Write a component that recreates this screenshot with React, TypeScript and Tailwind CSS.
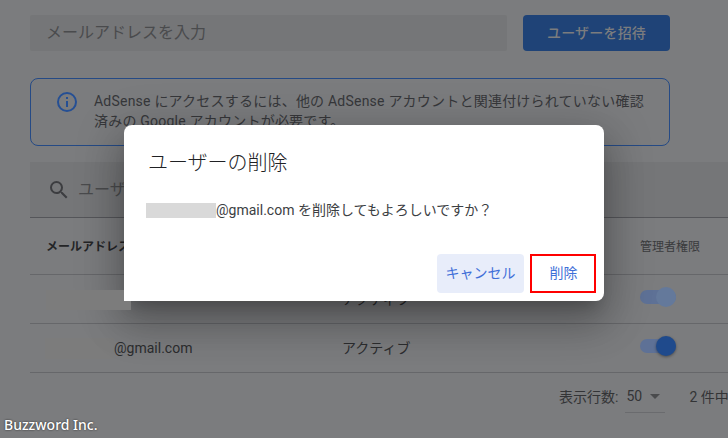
import React from "react";

function Toggle({ on }: { on: boolean }) {
  return (
    <div className="relative mb-[4px] h-[14px] w-[36px] rounded-full bg-[#5e7196]">
      <div className={`absolute right-0 top-[-3px] h-[20px] w-[20px] rounded-full ${on ? "bg-[#1f4a8c] shadow-[0_1px_3px_rgba(0,0,0,0.4)]" : "bg-[#64799b]"}`} />
    </div>
  );
}

export default function App() {
  return (
    <div className="relative h-[438px] w-[728px] overflow-hidden bg-[#7b7c7e] font-['Roboto','Noto_Sans_CJK_JP',sans-serif] text-[14px] text-[#2c2d2f]">
      <div className="ml-[30px] flex w-[698px] flex-col pt-[15px]">
        <div className="flex gap-[16px]">
          <div className="flex h-[36px] w-[477px] items-center rounded-[2px] bg-[#757678] pl-[16px] text-[16px] text-[#4a4b4d]">メールアドレスを入力</div>
          <div className="flex h-[36px] w-[147px] items-center justify-center rounded-[4px] bg-[#1f4377] text-[14px] font-medium tracking-[0.2px] text-[#7b7c7e]">ユーザーを招待</div>
        </div>
        <div className="mt-[27px] flex h-[68px] w-[640px] items-start rounded-[8px] border border-[#254a85] pl-[24px] pr-[24px] pt-[12px]">
          <svg width="24" height="24" viewBox="0 0 24 24" fill="none" className="mt-[-1px] shrink-0 text-[#254f94]">
            <circle cx="12" cy="12" r="9" stroke="currentColor" strokeWidth="2" />
            <path d="M11 11h2v6h-2zM11 7h2v2h-2z" fill="currentColor" />
          </svg>
          <p className="ml-[15px] text-[14px] leading-[20px] tracking-[0.22px] text-[#36373a]">AdSense にアクセスするには、他の AdSense アカウントと関連付けられていない確認済みの Google アカウントが必要です。</p>
        </div>
        <div className="mt-[16px] flex h-[56px] items-center border-b border-[#55565a] bg-[#757678] pl-[17px] text-[16px] text-[#4a4b4d]">
          <svg width="24" height="24" viewBox="0 0 24 24" className="text-[#3c3d40]" fill="currentColor">
            <path d="M15.5 14h-.79l-.28-.27A6.47 6.47 0 0 0 16 9.5 6.5 6.5 0 1 0 9.5 16c1.61 0 3.09-.59 4.23-1.57l.27.28v.79l5 4.99L20.49 19l-4.99-5zm-6 0C7.01 14 5 11.99 5 9.5S7.01 5 9.5 5 14 7.01 14 9.5 11.99 14 9.5 14z" />
          </svg>
          <span className="ml-[7px]">ユーザーを検索</span>
        </div>
        <div className="grid h-[57px] grid-cols-[312px_298px_1fr] items-center border-b border-[#66676a] pt-[2px] text-[12px]">
          <span className="pl-[16px] font-bold text-[#242527]">メールアドレス</span>
          <span />
          <span className="text-[#3a3b3d]">管理者権限</span>
        </div>
        <div className="grid h-[49px] grid-cols-[312px_298px_1fr] items-center border-b border-[#66676a]">
          <div />
          <span>アクティブ</span>
          <Toggle on={false} />
        </div>
        <div className="grid h-[49px] grid-cols-[312px_298px_1fr] items-center border-b border-[#66676a]">
          <div className="flex items-center pl-[15px]">
            <div className="h-[21px] w-[69px] bg-[#7c7c7c]" />
            <span>@gmail.com</span>
          </div>
          <span>アクティブ</span>
          <Toggle on />
        </div>
        <div className="flex h-[54px] items-center whitespace-nowrap pl-[529px] text-[14px] text-[#333436]">
          <span className="mt-[-6px]">表示行数:</span>
          <div className="ml-[7px] mr-[24px] flex h-[26px] w-[40px] shrink-0 items-start border-b border-[#6a6b6e] pl-[1px] leading-[18px]">
            <span>50</span>
            <span className="ml-[8px] mt-[7px] h-0 w-0 border-x-[5px] border-t-[5px] border-x-transparent border-t-[#4a4b4d]" />
          </div>
          <span className="mt-[-6px]">2 件中</span>
        </div>
      </div>

      <div className="absolute left-[124px] top-[125px] h-[176px] w-[480px] rounded-[8px] rounded-bl-none bg-white shadow-[0_11px_15px_-7px_rgba(0,0,0,0.2),0_24px_38px_3px_rgba(0,0,0,0.18),0_9px_46px_8px_rgba(0,0,0,0.16)]">
        <div className="pl-[24px] pt-[24px] text-[20px] font-light leading-[28px] text-[#202124]">ユーザーの削除</div>
        <div className="mt-[23px] flex items-center pl-[22px] text-[14px] leading-[20px] text-[#3c4043]">
          <div className="h-[15px] w-[70px] bg-[#d9d9d9]" />
          <span>@gmail.com を削除してもよろしいですか？</span>
        </div>
        <div className="absolute bottom-[8px] right-[8px] flex items-center gap-[6px] text-[14px] text-[#3f6fd8]">
          <div className="flex h-[39px] w-[87px] items-center justify-center rounded-[4px] bg-[#e8edfa]">キャンセル</div>
          <div className="flex h-[39px] w-[66px] items-center justify-center border-[2px] border-[#ff0000] pl-[1px]">削除</div>
        </div>
      </div>

      <div className="absolute left-[46px] top-[290px] h-[20px] w-[85px] bg-[#7c7c7c] [clip-path:polygon(0_0,78px_0,78px_11px,100%_11px,100%_100%,0_100%)]" />

      <div className="absolute bottom-[4px] left-[4px] font-['Noto_Sans','Noto_Sans_CJK_JP',sans-serif] text-[14px] font-medium leading-[18px] text-white [text-shadow:0_0_2px_#222]">Buzzword Inc.</div>
    </div>
  );
}
